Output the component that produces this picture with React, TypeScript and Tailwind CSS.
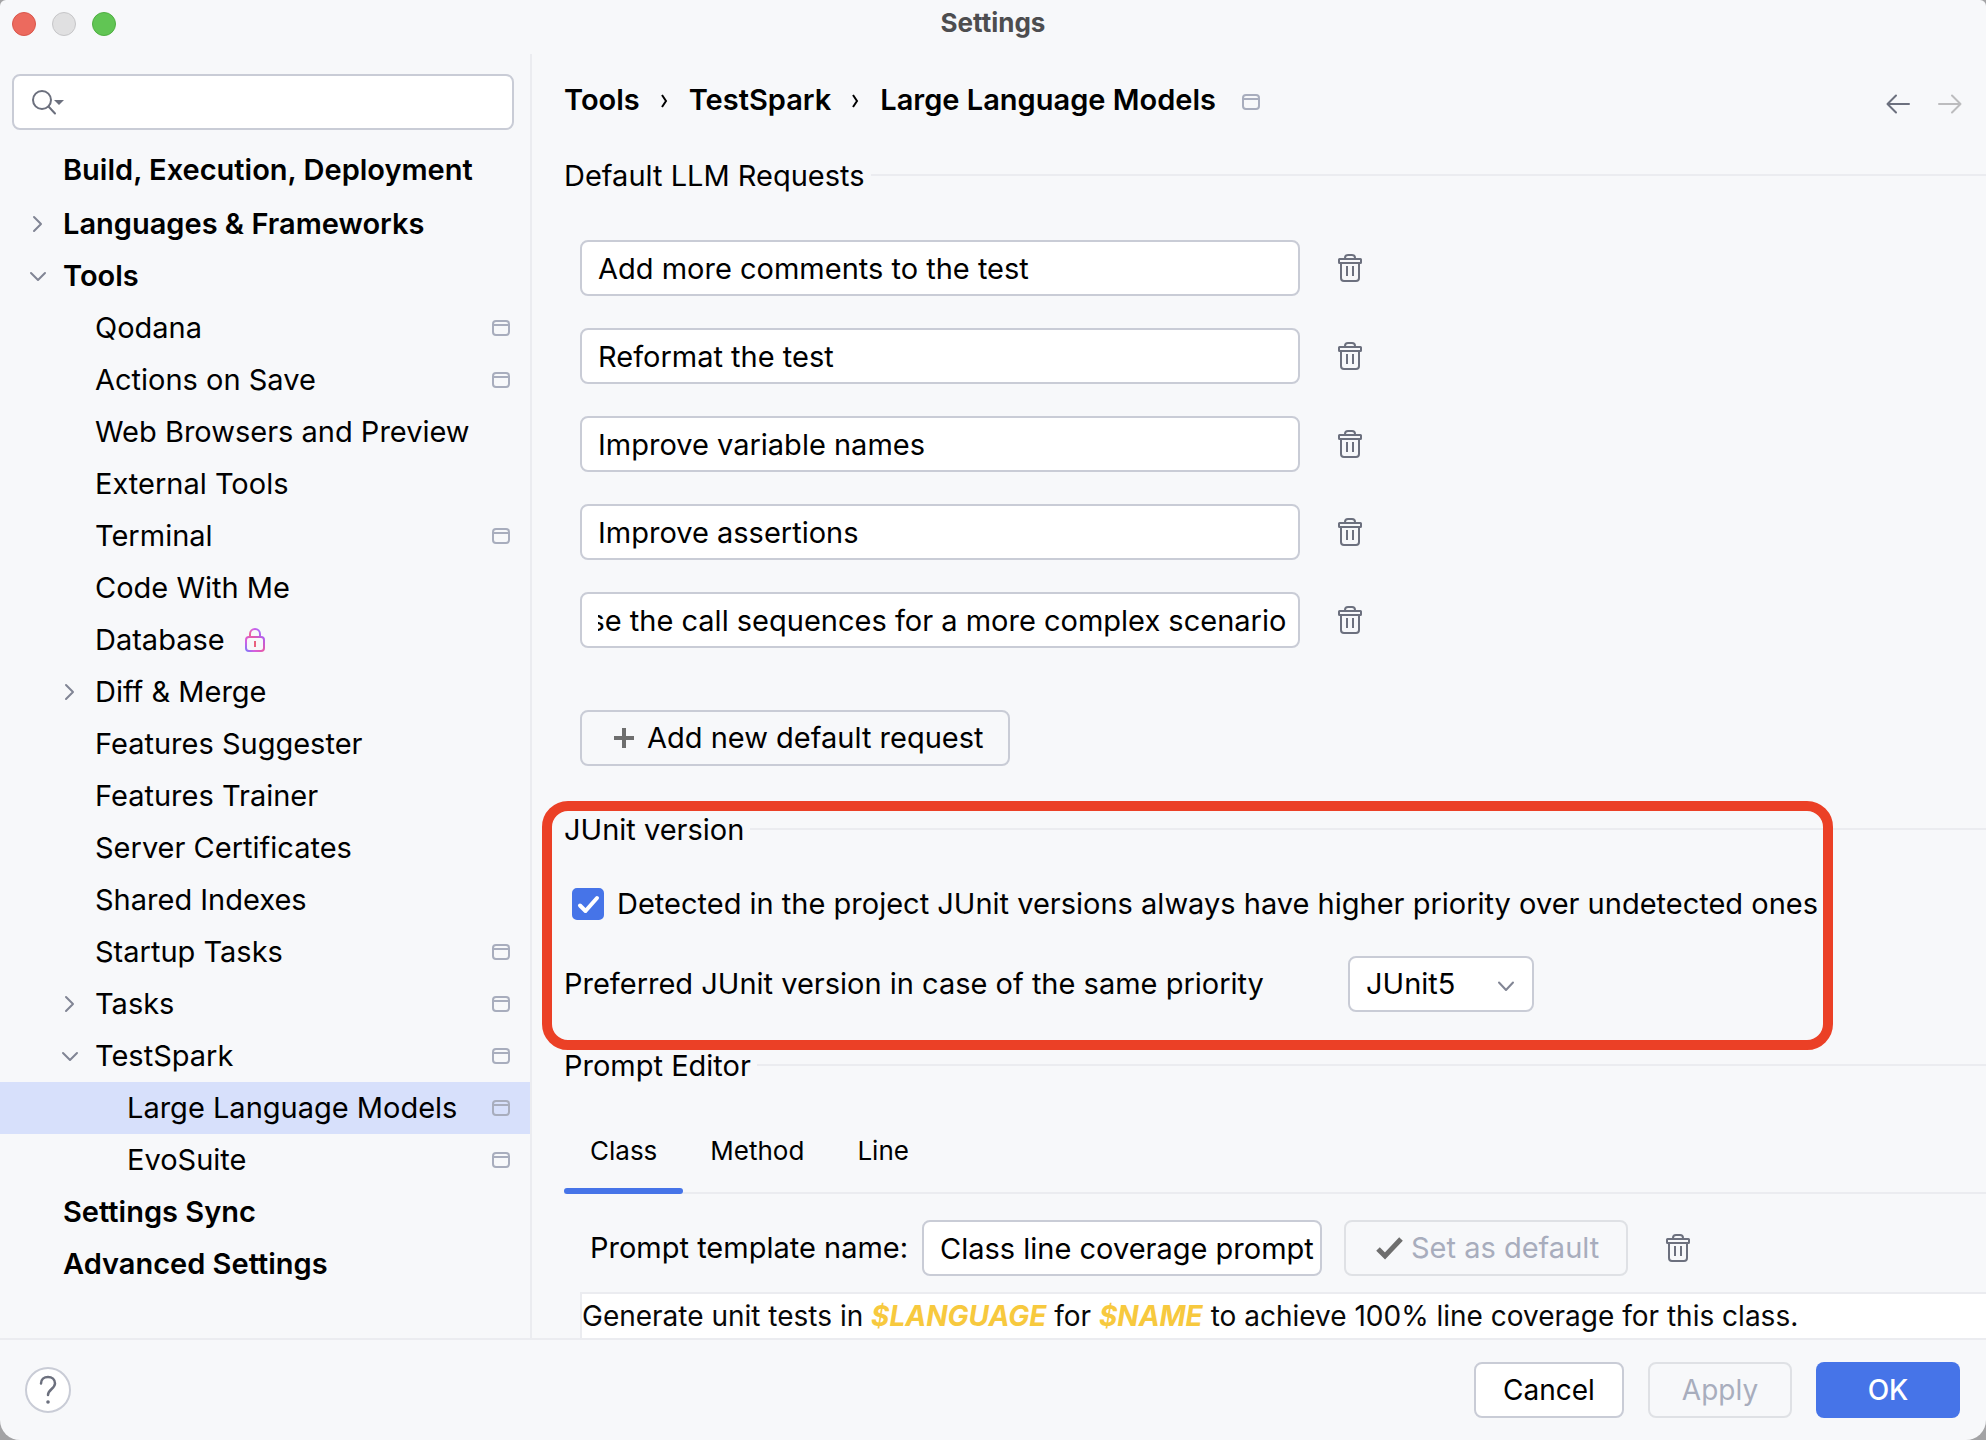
import { useEffect, useRef, useState } from "react";

type TreeItem = {
  label: string;
  level: 0 | 1 | 2;
  arrow?: "open" | "closed";
  project?: boolean;
  locked?: boolean;
  selected?: boolean;
};

const tree: TreeItem[] = [
  { label: "Languages & Frameworks", level: 0, arrow: "closed" },
  { label: "Tools", level: 0, arrow: "open" },
  { label: "Qodana", level: 1, project: true },
  { label: "Actions on Save", level: 1, project: true },
  { label: "Web Browsers and Preview", level: 1 },
  { label: "External Tools", level: 1 },
  { label: "Terminal", level: 1, project: true },
  { label: "Code With Me", level: 1 },
  { label: "Database", level: 1, locked: true },
  { label: "Diff & Merge", level: 1, arrow: "closed" },
  { label: "Features Suggester", level: 1 },
  { label: "Features Trainer", level: 1 },
  { label: "Server Certificates", level: 1 },
  { label: "Shared Indexes", level: 1 },
  { label: "Startup Tasks", level: 1, project: true },
  { label: "Tasks", level: 1, arrow: "closed", project: true },
  { label: "TestSpark", level: 1, arrow: "open", project: true },
  { label: "Large Language Models", level: 2, project: true, selected: true },
  { label: "EvoSuite", level: 2, project: true },
  { label: "Settings Sync", level: 0 },
  { label: "Advanced Settings", level: 0 },
];

const requests = [
  "Add more comments to the test",
  "Reformat the test",
  "Improve variable names",
  "Improve assertions",
  "Increase the call sequences for a more complex scenario",
];

const indent = { 0: "pl-[22px]", 1: "pl-[54px]", 2: "pl-[86px]" };

function ProjectIcon() {
  return (
    <svg width="18" height="16" viewBox="0 0 18 16" fill="none" stroke="#a8adbd" strokeWidth="2" className="shrink-0">
      <rect x="1" y="1" width="16" height="14" rx="3" />
      <path d="M1 5H17" />
    </svg>
  );
}

function TreeArrow({ state }: { state?: "open" | "closed" }) {
  return (
    <svg width="32" height="32" viewBox="0 0 32 32" fill="none" stroke="#818594" strokeWidth="2" strokeLinecap="round" strokeLinejoin="round" className="shrink-0">
      {state === "closed" && <path d="M12 9L19 16L12 23" />}
      {state === "open" && <path d="M9 13L16 20L23 13" />}
    </svg>
  );
}

function LockIcon() {
  return (
    <svg width="20" height="24" viewBox="0 0 20 24" fill="none" strokeWidth="2" className="ml-5 shrink-0">
      <defs>
        <linearGradient id="lock-body" x1="0" y1="24" x2="20" y2="8" gradientUnits="userSpaceOnUse">
          <stop offset="0" stopColor="#6b7bff" />
          <stop offset="0.3" stopColor="#d65fe0" />
          <stop offset="0.6" stopColor="#e65aa8" />
          <stop offset="1" stopColor="#a460ff" />
        </linearGradient>
        <linearGradient id="lock-top" x1="4" y1="8" x2="16" y2="2" gradientUnits="userSpaceOnUse">
          <stop offset="0" stopColor="#f0648c" />
          <stop offset="0.5" stopColor="#d65fe0" />
          <stop offset="1" stopColor="#9a6bff" />
        </linearGradient>
      </defs>
      <path d="M5 9V6A5 5 0 0 1 15 6V9" stroke="url(#lock-top)" />
      <rect x="1" y="9" width="18" height="14" rx="3" stroke="url(#lock-body)" />
      <path d="M10 13V19" stroke="#e9617f" />
    </svg>
  );
}

function TrashButton({ label }: { label: string }) {
  return (
    <button type="button" aria-label={label} className="shrink-0">
      <svg width="24" height="28" viewBox="0 0 24 28" fill="none" stroke="#6c707e" strokeWidth="2">
        <path d="M7 5V4A3 3 0 0 1 10 1H14A3 3 0 0 1 17 4V5" />
        <rect x="1" y="5" width="22" height="4" rx="0.5" />
        <path d="M3 9V24A3 3 0 0 0 6 27H18A3 3 0 0 0 21 24V9" />
        <path d="M9 12V22M15 12V22" />
      </svg>
    </button>
  );
}

function RequestField({ value, index }: { value: string; index: number }) {
  const ref = useRef<HTMLInputElement>(null);
  useEffect(() => {
    if (ref.current) ref.current.scrollLeft = ref.current.scrollWidth;
  }, []);
  return (
    <div className="flex items-center gap-[38px]">
      <input
        ref={ref}
        type="text"
        aria-label={`Default request ${index + 1}`}
        defaultValue={value}
        className="h-14 w-[720px] rounded-lg border-2 border-[#c9ccd6] bg-white pr-3 pl-4"
      />
      <TrashButton label={`Delete request ${index + 1}`} />
    </div>
  );
}

function SectionTitle({ children }: { children: string }) {
  return (
    <div className="flex h-14 items-center gap-1.5 pb-0.5">
      <h2 className="pt-0.5">{children}</h2>
      <div className="h-0.5 flex-1 bg-[#ebecf0]" />
    </div>
  );
}

function Sidebar() {
  return (
    <aside className="w-[532px] shrink-0 border-r-2 border-[#ebecf0]">
      <div className="relative mx-3 mt-5 mr-4">
        <input type="search" aria-label="Search settings" className="h-14 w-full rounded-lg border-2 border-[#c9ccd6] bg-white pl-14" />
        <svg width="34" height="26" viewBox="0 0 34 26" className="absolute top-[15px] left-[19px]" fill="none">
          <circle cx="11" cy="11" r="9" stroke="#6c707e" strokeWidth="2" />
          <path d="M17.500 17.500L24 24.500" stroke="#6c707e" strokeWidth="2" strokeLinecap="round" />
          <path d="M23 11H33L28 16Z" fill="#6c707e" />
        </svg>
      </div>
      <nav aria-label="Settings categories" className="pt-[14px]">
        <ul>
          <li>
            <button type="button" className="flex h-[54px] w-full items-center pb-0.5 pl-[63px] text-left font-semibold">
              Build, Execution, Deployment
            </button>
          </li>
          {tree.map((item) => (
            <li key={item.label}>
              <button
                type="button"
                aria-current={item.selected ? "page" : undefined}
                className={`flex h-[52px] w-full items-center pr-5 text-left ${indent[item.level]} ${item.level === 0 ? "font-semibold" : ""} ${item.selected ? "bg-[#d7e0fb]" : ""}`}
              >
                <TreeArrow state={item.arrow} />
                <span className="ml-[9px] whitespace-nowrap">{item.label}</span>
                {item.locked && <LockIcon />}
                <span className="flex-1" />
                {item.project && <ProjectIcon />}
              </button>
            </li>
          ))}
        </ul>
      </nav>
    </aside>
  );
}

function Crumb() {
  return (
    <svg width="7" height="14" viewBox="0 0 7 14" fill="none" stroke="#000" strokeWidth="2" className="mt-0.5 shrink-0">
      <path d="M1 1L5 7L1 13" />
    </svg>
  );
}

export default function App() {
  const [tab, setTab] = useState("Class");
  const [detected, setDetected] = useState(true);
  return (
    <div className="min-h-screen bg-[#a3a3a5] font-['Inter',sans-serif] text-[29px] leading-9 text-black">
      <div className="flex min-h-screen flex-col overflow-hidden rounded-t-[6px] rounded-b-[20px] bg-[#f7f8fa]">
        <header className="relative flex h-[54px] items-start justify-center">
          <div className="absolute top-3 left-3 flex gap-4">
            <button type="button" aria-label="Close" className="size-6 rounded-full border border-[#d9564b] bg-[#ec6a5e]" />
            <button type="button" aria-label="Minimize" className="size-6 rounded-full border border-[#c6c6c8] bg-[#e0e0e1]" />
            <button type="button" aria-label="Zoom" className="size-6 rounded-full border border-[#4faf42] bg-[#61c554]" />
          </div>
          <h1 className="pt-[5px] text-[26px] font-bold text-[#4d4d4f]">Settings</h1>
        </header>

        <div className="flex flex-1">
          <Sidebar />
          <main className="flex min-w-0 flex-1 flex-col pl-8">
            <div className="flex h-[94px] items-center pb-0.5">
              <nav aria-label="Breadcrumb" className="flex items-center font-semibold">
                <a href="#tools">Tools</a>
                <span className="mx-[21px]"><Crumb /></span>
                <a href="#testspark">TestSpark</a>
                <span className="mx-[21px]"><Crumb /></span>
                <a href="#llm">Large Language Models</a>
              </nav>
              <span className="mt-1 ml-[26px]"><ProjectIcon /></span>
              <div className="mt-2 mr-6 ml-auto flex gap-7">
                <button type="button" aria-label="Back">
                  <svg width="24" height="20" viewBox="0 0 24 20" fill="none" stroke="#6c707e" strokeWidth="2" strokeLinecap="round" strokeLinejoin="round">
                    <path d="M23 10H1.500M10 1.500L1.500 10L10 18.500" />
                  </svg>
                </button>
                <button type="button" aria-label="Forward" disabled>
                  <svg width="24" height="20" viewBox="0 0 24 20" fill="none" stroke="#bcbcbe" strokeWidth="2" strokeLinecap="round" strokeLinejoin="round">
                    <path d="M1 10H22.500M14 1.500L22.500 10L14 18.500" />
                  </svg>
                </button>
              </div>
            </div>

            <section>
              <SectionTitle>Default LLM Requests</SectionTitle>
              <div className="mt-9 flex flex-col gap-8 pl-4">
                {requests.map((r, i) => (
                  <RequestField key={r} value={r} index={i} />
                ))}
              </div>
              <button type="button" className="mt-[62px] ml-4 flex h-14 w-[430px] items-center rounded-lg border-2 border-[#c9ccd6] pl-8">
                <svg width="20" height="20" viewBox="0 0 20 20" fill="none" stroke="#6e6e6e" strokeWidth="4">
                  <path d="M10 0V20M0 10H20" />
                </svg>
                <span className="ml-[13px] whitespace-nowrap">Add new default request</span>
              </button>
            </section>

            <section className="relative mt-9">
              <SectionTitle>JUnit version</SectionTitle>
              <div className="mt-[30px] flex h-8 items-center pl-2">
                <span className="grid size-8 shrink-0">
                  <input
                    id="detected"
                    type="checkbox"
                    checked={detected}
                    onChange={(e) => setDetected(e.target.checked)}
                    className="peer col-start-1 row-start-1 size-8 appearance-none rounded-[5px] border-2 border-[#c9ccd6] bg-white checked:border-[#4674e8] checked:bg-[#4674e8]"
                  />
                  <svg viewBox="0 0 32 32" fill="none" stroke="#fff" strokeWidth="4" strokeLinecap="round" strokeLinejoin="round" className="pointer-events-none invisible col-start-1 row-start-1 size-8 peer-checked:visible">
                    <path d="M8 17.500L13.500 23L25 10" />
                  </svg>
                </span>
                <label htmlFor="detected" className="ml-[13px] whitespace-nowrap">
                  Detected in the project JUnit versions always have higher priority over undetected ones
                </label>
              </div>
              <div className="mt-9 flex items-center">
                <label htmlFor="junit" className="w-[784px] shrink-0">Preferred JUnit version in case of the same priority</label>
                <div className="relative">
                  <select id="junit" defaultValue="JUnit5" className="h-14 w-[186px] appearance-none rounded-lg border-2 border-[#c9ccd6] bg-white pl-4">
                    <option>JUnit5</option>
                    <option>JUnit4</option>
                  </select>
                  <svg width="18" height="11" viewBox="0 0 18 11" fill="none" stroke="#818594" strokeWidth="2" strokeLinecap="round" strokeLinejoin="round" className="pointer-events-none absolute top-[25px] right-[19px]">
                    <path d="M2 1.500L9 9L16 1.500" />
                  </svg>
                </div>
              </div>
              <div className="pointer-events-none absolute -top-px -bottom-[38px] -left-[22px] w-[1291px] rounded-[26px] border-10 border-[#eb4026]" />
            </section>

            <section className="mt-[26px] flex flex-1 flex-col">
              <SectionTitle>Prompt Editor</SectionTitle>
              <div role="tablist" className="mt-4 flex h-[84px] gap-px border-b-2 border-[#ebecf0] text-[26px]">
                {["Class", "Method", "Line"].map((name) => (
                  <button key={name} type="button" role="tab" aria-selected={tab === name} onClick={() => setTab(name)} className="relative h-[84px] px-[26px] pb-0.5">
                    {name}
                    {tab === name && <span className="absolute inset-x-0 bottom-0 h-1.5 rounded-full bg-[#4674e8]" />}
                  </button>
                ))}
              </div>
              <div className="mt-[26px] flex items-center pl-[26px]">
                <label htmlFor="template" className="w-[332px] shrink-0">Prompt template name:</label>
                <input id="template" type="text" defaultValue="Class line coverage prompt" className="h-14 w-[400px] rounded-lg border-2 border-[#c9ccd6] bg-white pr-1 pl-4" />
                <button type="button" disabled className="ml-[22px] flex h-14 w-[284px] items-center rounded-lg border-2 border-[#dfe1e5] pl-[30px] text-[#a8adbd]">
                  <svg width="28" height="24" viewBox="0 0 28 24" fill="none" stroke="#6e6e6e" strokeWidth="5">
                    <path d="M2 13L9 20L25 3" />
                  </svg>
                  <span className="ml-[7px] whitespace-nowrap">Set as default</span>
                </button>
                <span className="ml-[38px] flex"><TrashButton label="Delete template" /></span>
              </div>
              <div role="textbox" aria-label="Prompt template" aria-multiline="true" tabIndex={0} className="mt-4 ml-4 flex-1 border-t-2 border-l-2 border-[#ebecf0] bg-white text-[28px] leading-[44px] text-[#080808]">
                Generate unit tests in <span className="font-bold text-[#f7c93e] italic">$LANGUAGE</span> for{" "}
                <span className="font-bold text-[#f7c93e] italic">$NAME</span> to achieve 100% line coverage for this class.
              </div>
            </section>
          </main>
        </div>

        <footer className="flex h-[102px] items-center gap-6 border-t-2 border-[#ebecf0] pr-[26px] pl-[25px] text-[28px]">
          <button type="button" aria-label="Help" className="mr-auto grid size-[46px] place-items-center rounded-full border-2 border-[#c9ccd6] bg-white">
            <svg width="18" height="30" viewBox="0 0 18 30" fill="none">
              <path d="M2 8.500C2 4.500 5 2 9 2C13 2 16 4.500 16 8.500C16 13.500 9 14.500 9 20" stroke="#6c707e" strokeWidth="2.500" strokeLinecap="round" />
              <circle cx="9" cy="27" r="1.800" fill="#6c707e" />
            </svg>
          </button>
          <button type="button" className="h-14 w-[150px] rounded-lg border-2 border-[#c9ccd6] bg-white">Cancel</button>
          <button type="button" disabled className="h-14 w-36 rounded-lg border-2 border-[#dfe1e5] text-[#a8adbd]">Apply</button>
          <button type="button" className="h-14 w-36 rounded-lg bg-[#4674e8] font-medium text-white">OK</button>
        </footer>
      </div>
    </div>
  );
}
